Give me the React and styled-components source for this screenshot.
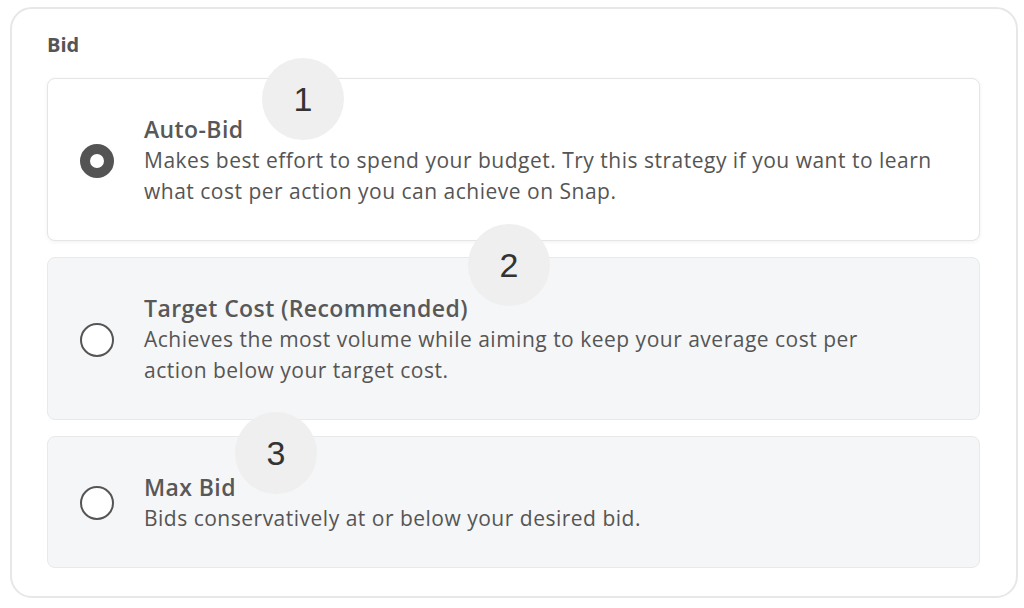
import React from 'react';
import styled, { createGlobalStyle } from 'styled-components';

const GlobalStyle = createGlobalStyle`
  html, body {
    margin: 0;
    padding: 0;
    background: #ffffff;
  }
  * {
    box-sizing: border-box;
  }
`;

const options = [
  {
    id: 'auto',
    title: 'Auto-Bid',
    lines: [
      'Makes best effort to spend your budget. Try this strategy if you want to learn',
      'what cost per action you can achieve on Snap.',
    ],
  },
  {
    id: 'target',
    title: 'Target Cost (Recommended)',
    lines: [
      'Achieves the most volume while aiming to keep your average cost per',
      'action below your target cost.',
    ],
  },
  {
    id: 'max',
    title: 'Max Bid',
    lines: ['Bids conservatively at or below your desired bid.'],
  },
];

const markers = [
  { n: 1, left: 250, top: 49 },
  { n: 2, left: 456, top: 215 },
  { n: 3, left: 223, top: 403 },
];

const App = () => {
  const selected = 'auto';

  return (
    <Page>
      <GlobalStyle />
      <Card>
        <SectionLabel>Bid</SectionLabel>
        <OptionList>
          {options.map((opt) => {
            const active = opt.id === selected;
            return (
              <Option key={opt.id} $active={active}>
                <Radio $active={active} />
                <OptionText>
                  <OptionTitle>{opt.title}</OptionTitle>
                  {opt.lines.map((line) => (
                    <OptionLine key={line}>{line}</OptionLine>
                  ))}
                </OptionText>
              </Option>
            );
          })}
        </OptionList>
        {markers.map((m) => (
          <Marker key={m.n} $left={m.left} $top={m.top}>
            {m.n}
          </Marker>
        ))}
      </Card>
    </Page>
  );
};

const Page = styled.div`
  width: 1024px;
  height: 608px;
  padding: 7px 6px 10px 10px;
  font-family: 'Open Sans', Lato, sans-serif;
`;

const Card = styled.div`
  position: relative;
  height: 591px;
  border: 2px solid #e6e7e8;
  border-radius: 22px;
  padding: 24px 36px 0 35px;
  background: #ffffff;
`;

const SectionLabel = styled.div`
  font-size: 20px;
  line-height: 24px;
  font-weight: 700;
  color: #555555;
  margin-bottom: 21px;
`;

const OptionList = styled.div`
  display: flex;
  flex-direction: column;
  gap: 16px;
`;

const Option = styled.div`
  display: flex;
  align-items: center;
  gap: 30px;
  padding: 35px 32px 33px;
  border: 1px solid ${(p) => (p.$active ? '#e4e5e6' : '#e8e9ea')};
  border-radius: 8px;
  background: ${(p) => (p.$active ? '#ffffff' : '#f5f6f7')};
  box-shadow: ${(p) => (p.$active ? '0 1px 4px rgba(0, 0, 0, 0.06)' : 'none')};
`;

const Radio = styled.span`
  flex: none;
  width: 34px;
  height: 34px;
  border-radius: 50%;
  background: #ffffff;
  border: ${(p) => (p.$active ? '10px solid #545454' : '2px solid #555555')};
`;

const OptionText = styled.div`
  display: flex;
  flex-direction: column;
  color: #555555;
`;

const OptionTitle = styled.div`
  font-size: 23px;
  line-height: 31px;
  font-weight: 600;
  letter-spacing: 0.4px;
  color: #585858;
`;

const OptionLine = styled.div`
  font-size: 21px;
  line-height: 31px;
  font-weight: 400;
  letter-spacing: 0.5px;
`;

const Marker = styled.div`
  position: absolute;
  left: ${(p) => p.$left}px;
  top: ${(p) => p.$top}px;
  width: 82px;
  height: 82px;
  border-radius: 50%;
  background: rgba(238, 238, 238, 0.95);
  display: flex;
  align-items: center;
  justify-content: center;
  font-family: 'Liberation Sans', Arial, sans-serif;
  font-size: 34px;
  color: #333333;
`;

export default App;
